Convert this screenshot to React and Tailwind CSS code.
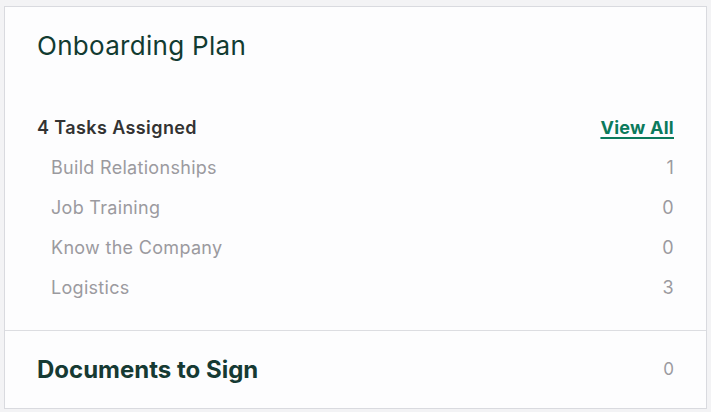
import React from "react";

const tasks = [
  { name: "Build Relationships", count: 1 },
  { name: "Job Training", count: 0 },
  { name: "Know the Company", count: 0 },
  { name: "Logistics", count: 3 },
];

const font = { fontFamily: "Inter, 'Noto Sans', sans-serif" };

const App = () => {
  return (
    <div
      className="w-[711px] h-[412px] bg-[#f3f3f5] pt-[6px] pl-[4px] pr-[4px] overflow-hidden"
      style={font}
    >
      <div className="w-[703px] h-[403px] bg-[#fdfdfe] border border-[#d9dadf] flex flex-col">
        <div className="px-8 pt-[23px] h-[100px]">
          <h1 className="text-[26px] leading-8 text-[#123b31] tracking-[0.3px]">
            Onboarding Plan
          </h1>
        </div>

        <div className="px-8 pb-[23px]">
          <div className="h-10 flex items-center justify-between">
            <span className="text-[18px] font-semibold text-[#333333] tracking-[0.4px]">
              4 Tasks Assigned
            </span>
            <a
              href="#"
              className="text-[18px] font-bold text-[#0b7a5c] tracking-[0.25px] underline underline-offset-[3px] decoration-2"
            >
              View All
            </a>
          </div>
          {tasks.map((task, index) => (
            <div
              key={index}
              className="h-10 flex items-center justify-between pl-[14px] text-[18px] tracking-[0.3px] text-[#9b9a9f]"
            >
              <span>{task.name}</span>
              <span>{task.count}</span>
            </div>
          ))}
        </div>

        <div className="border-t border-[#dcdde1] flex-1 px-8 flex items-center justify-between">
          <h2 className="text-[24px] font-bold text-[#163a33] tracking-[0px]">
            Documents to Sign
          </h2>
          <span className="text-[17px] text-[#9b9a9f]">0</span>
        </div>
      </div>
    </div>
  );
};

export default App;
